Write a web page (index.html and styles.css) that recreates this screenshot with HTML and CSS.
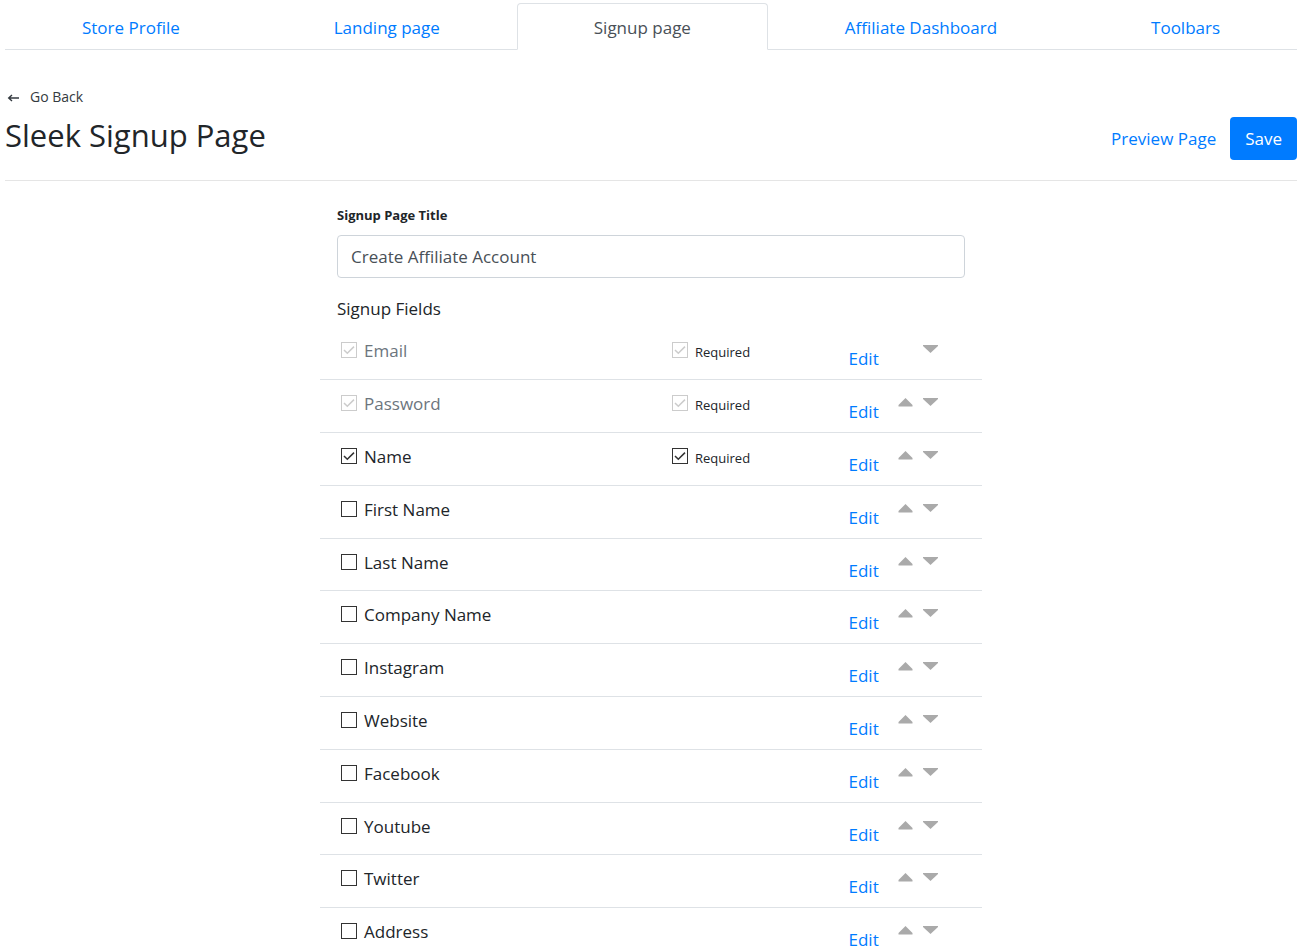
FILE: index.html
```html
<!DOCTYPE html>
<html lang="en">
<head>
<meta charset="utf-8">
<meta name="viewport" content="width=device-width, initial-scale=1">
<title>Sleek Signup Page</title>
<link rel="stylesheet" href="styles.css">
</head>
<body>
<nav class="tabs">
  <a class="tab" href="#profile">Store Profile</a>
  <a class="tab" href="#landing">Landing page</a>
  <a class="tab tab-active" href="#signup" aria-current="page">Signup page</a>
  <a class="tab" href="#dashboard">Affiliate Dashboard</a>
  <a class="tab" href="#toolbars">Toolbars</a>
</nav>
<header class="page-header">
  <div>
    <a class="back" href="#back">
      <svg class="back-icon" viewBox="0 0 12 10" aria-hidden="true"><path d="M11.500 5H1M4.500 2L1.200 5l3.300 3"/></svg>
      Go Back</a>
    <h1 class="title">Sleek Signup Page</h1>
  </div>
  <div class="actions">
    <a class="preview" href="#preview">Preview Page</a>
    <button class="save" type="button">Save</button>
  </div>
</header>
<main class="form">
  <div class="form-top">
    <label class="form-label" for="page-title">Signup Page Title</label>
    <input class="text-input" id="page-title" type="text" value="Create Affiliate Account">
    <h2 class="subtitle">Signup Fields</h2>
  </div>
  <ul class="fields" id="fields"></ul>
</main>
<script src="fields.js"></script>
</body>
</html>
```
FILE: styles.css
```css
* { box-sizing: border-box; }
body {
  margin: 0;
  padding: 3px 5px 0;
  background: #fff;
  color: #212529;
  font-family: "Segoe UI", "Open Sans", "Noto Sans", sans-serif;
  font-size: 17px;
  line-height: 26px;
  overflow: hidden;
}
a { color: #007bff; text-decoration: none; }
.tabs { display: flex; border-bottom: 1px solid #dee2e6; }
.tab {
  flex: 1 1 auto;
  margin-bottom: -1px;
  padding: 11px 17px 9px;
  border: 1px solid transparent;
  border-radius: 4px 4px 0 0;
  line-height: 25px;
  text-align: center;
}
.tab-active {
  color: #495057;
  background: #fff;
  border-color: #dee2e6 #dee2e6 #fff;
}
.page-header {
  display: flex;
  justify-content: space-between;
  align-items: flex-end;
  padding: 36px 0 20px;
  border-bottom: 1px solid #e5e5e5;
}
.back {
  display: flex;
  align-items: center;
  gap: 10px;
  padding-left: 2px;
  color: #343a40;
  font-size: 14px;
  line-height: 22px;
}
.back-icon { width: 13px; height: 10px; margin-top: 2px; fill: none; stroke: #343a40; stroke-width: 1.4; }
.title { margin: 7px 0 5px; font-size: 31px; font-weight: 400; line-height: 40px; }
.actions { display: flex; align-items: center; gap: 14px; }
.save {
  height: 43px;
  padding: 0 15px;
  border: 0;
  border-radius: 4px;
  background: #007bff;
  color: #fff;
  font: inherit;
}
.form { max-width: 662px; margin: 0 auto; }
.form-top { padding: 24px 17px 0; }
.form-label { display: block; margin-bottom: 9px; font-size: 13px; font-weight: 700; line-height: 21px; }
.text-input {
  display: block;
  width: 100%;
  height: 43px;
  padding: 0 13px;
  border: 1px solid #ced4da;
  border-radius: 4px;
  color: #495057;
  font: inherit;
}
.subtitle { margin: 18px 0 5px; font-size: 17px; font-weight: 400; line-height: 26px; }
.fields { margin: 0; padding: 0; list-style: none; }
.field {
  display: grid;
  grid-template-columns: 2fr 1fr 1fr;
  height: 53px;
  border-bottom: 1px solid #dee2e6;
}
.field:nth-child(5n) { height: 52px; }
.check { display: flex; align-items: flex-start; gap: 7px; padding: 11px 0 0 21px; }
.check-muted { color: #6c757d; }
.check-small { font-size: 13px; line-height: 28px; }
.box {
  appearance: none;
  flex: none;
  width: 16px;
  height: 16px;
  margin: 4px 0 0;
  border: 1px solid #333;
  background: #fff;
}
.box:disabled { border-color: #ccc; }
.box-wrap { display: grid; }
.box-wrap > * { grid-area: 1 / 1; }
.mark { width: 16px; height: 16px; margin-top: 4px; fill: none; stroke: #333; stroke-width: 1.5; pointer-events: none; }
.box:disabled + .mark { stroke: #ccc; }
.ops { display: flex; align-items: flex-start; padding-left: 32px; grid-column: 3; }
.edit { width: 49px; padding-top: 23px; line-height: 18px; }
.move {
  width: 15px;
  height: 10px;
  margin: 17px 10px 0 0;
  padding: 0;
  border: 0;
  background: none;
}
.move svg { display: block; width: 15px; height: 10px; fill: #aaa; }
.move-hidden { visibility: hidden; }
```
FILE: fields.js
```js
const fields = [
  { name: "Email", checked: true, locked: true, required: true },
  { name: "Password", checked: true, locked: true, required: true },
  { name: "Name", checked: true, required: true },
  { name: "First Name" },
  { name: "Last Name" },
  { name: "Company Name" },
  { name: "Instagram" },
  { name: "Website" },
  { name: "Facebook" },
  { name: "Youtube" },
  { name: "Twitter" },
  { name: "Address" },
];

function checkbox(label, classes, checked, locked) {
  const mark = checked ? '<svg class="mark" viewBox="0 0 16 16" aria-hidden="true"><path d="M3 8L6.300 11.300L13 4.600"/></svg>' : "";
  return `<label class="check ${classes}"><span class="box-wrap"><input class="box" type="checkbox"${checked ? " checked" : ""}${locked ? " disabled" : ""}>${mark}</span>${label}</label>`;
}

document.getElementById("fields").innerHTML = fields.map((f, i) => `
  <li class="field">
    ${checkbox(f.name, f.locked ? "check-muted" : "", f.checked, f.locked)}
    ${f.required ? checkbox("Required", "check-small", true, f.locked) : ""}
    <div class="ops">
      <a class="edit" href="#edit">Edit</a>
      <button class="move ${i === 0 ? "move-hidden" : ""}" type="button" aria-label="Move up"><svg viewBox="0 0 15 10"><path d="M7.500 1L14.500 8V9.500H.5V8Z"/></svg></button>
      <button class="move" type="button" aria-label="Move down"><svg viewBox="0 0 15 10"><path d="M0 1H15V2L7.500 9L0 2Z"/></svg></button>
    </div>
  </li>`).join("");
```
